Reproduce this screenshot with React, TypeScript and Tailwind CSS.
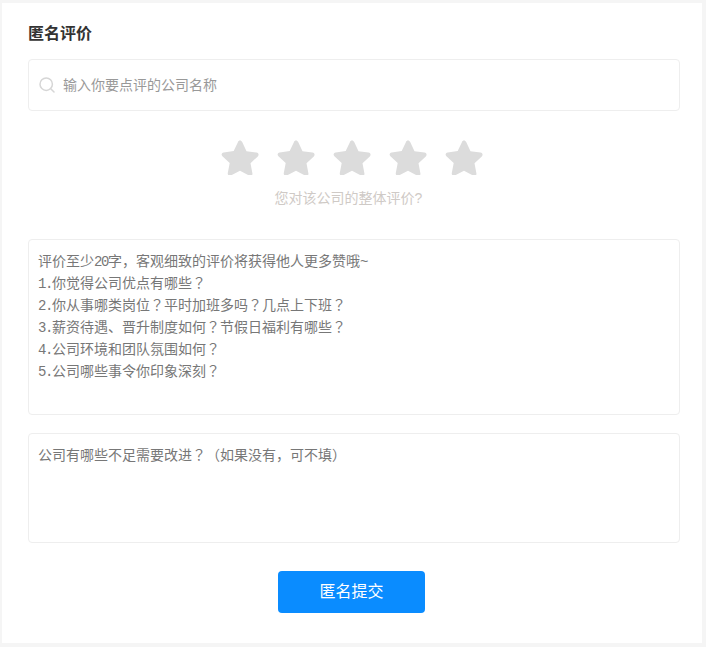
const sans = "font-['Liberation_Sans','Noto_Sans_CJK_SC',sans-serif]";

const Star = () => (
  <svg width="38" height="36" viewBox="0 0 38 36" className="block">
    <path
      d="M19 1.5c1 0 1.7.6 2.2 1.6l4.3 9.2 10 1.3c2.1.3 2.8 2.4 1.3 3.8l-7.3 6.9 1.9 9.9c.4 2.1-1.4 3.4-3.2 2.4L19 31.7l-9 4.7c-1.8 1-3.6-.3-3.2-2.4l1.9-9.9-7.3-6.9c-1.5-1.4-.8-3.5 1.3-3.8l10-1.3 4.3-9.2C17.3 2.1 18 1.5 19 1.5z"
      fill="#dcdcdc"
    />
  </svg>
);

// digits and dots in the placeholder are half an em wide
const Num = ({ children }: { children: string }) => (
  <span className="font-['Liberation_Mono',monospace] leading-none tracking-[-1.4px]">{children}</span>
);

// the full-width question mark sits in the middle of its cell
const Q = () => <span className="font-['Noto_Sans_CJK_TC',sans-serif] leading-none">？</span>;

export default function App() {
  return (
    <div className={`h-[647px] w-[706px] bg-[#f5f5f5] pl-[2px] pr-[4px] pt-[3px] pb-[4px] ${sans}`}>
      <div className="flex h-[640px] flex-col bg-white pl-[26px] pr-[22px] pt-[20px]">
        <h1 className="text-[16px] leading-[22px] font-bold text-[#333]">匿名评价</h1>

        <div className="mt-[14px] flex h-[52px] items-center rounded-[4px] border border-[#eee] pl-[10px]">
          <svg width="16" height="16" viewBox="0 0 16 16" fill="none" stroke="#d6d6d6" strokeWidth="1.5" strokeLinecap="round">
            <circle cx="7.2" cy="7.2" r="6.2" />
            <path d="M12 12l3 3" />
          </svg>
          <span className="ml-[8px] text-[14px] leading-[20px] text-[#999]">输入你要点评的公司名称</span>
        </div>

        <div className="mt-[28px] flex justify-center gap-[18px] pr-[4px]">
          {[0, 1, 2, 3, 4].map((i) => (
            <Star key={i} />
          ))}
        </div>
        <p className="mt-[13px] pr-[11px] text-center text-[14px] leading-[20px] font-normal text-[#cfcac6]">您对该公司的整体评价?</p>

        <div className="mt-[31px] h-[176px] rounded-[4px] border border-[#eee] pl-[9px] pr-[10px] pt-[10px] text-[14px] leading-[22px] text-[#777]">
          <div>评价至少<Num>20</Num>字，客观细致的评价将获得他人更多赞哦<Num>~</Num></div>
          <div><Num>1.</Num>你觉得公司优点有哪些<Q /></div>
          <div><Num>2.</Num>你从事哪类岗位<Q />平时加班多吗<Q />几点上下班<Q /></div>
          <div><Num>3.</Num>薪资待遇、晋升制度如何<Q />节假日福利有哪些<Q /></div>
          <div><Num>4.</Num>公司环境和团队氛围如何<Q /></div>
          <div><Num>5.</Num>公司哪些事令你印象深刻<Q /></div>
        </div>

        <div className="mt-[18px] h-[110px] rounded-[4px] border border-[#eee] pl-[9px] pr-[10px] pt-[10px] text-[14px] leading-[22px] text-[#777]">
          公司有哪些不足需要改进<Q />（如果没有，可不填）
        </div>

        <div className="mt-[28px] flex justify-center pr-[5px]">
          <button className="h-[42px] w-[147px] rounded-[4px] bg-[#0a8cff] text-[16px] text-white">匿名提交</button>
        </div>
      </div>
    </div>
  );
}
